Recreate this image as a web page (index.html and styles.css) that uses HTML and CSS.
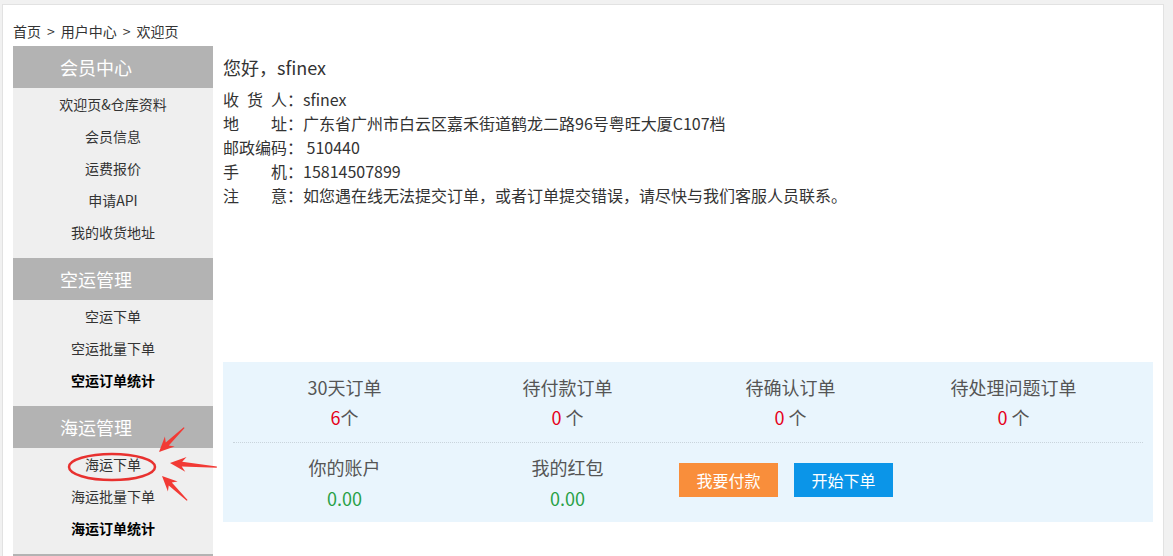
FILE: index.html
```html
<!DOCTYPE html>
<html lang="zh-CN">
  <head>
    <meta charset="UTF-8" />
    <meta name="viewport" content="width=device-width, initial-scale=1.0" />
    <title>用户中心 - 欢迎页</title>
    <link rel="stylesheet" href="styles.css">
  </head>
  <body>
    <div class="page">
      <div class="crumbs">
        <a href="#">首页</a><span class="sep">&gt;</span><a href="#">用户中心</a><span class="sep">&gt;</span><span>欢迎页</span>
      </div>

      <div class="layout">
        <aside class="sidebar">
          <div class="menu-group">
            <div class="menu-title">会员中心</div>
            <ul class="menu-list">
              <li><a href="#">欢迎页&amp;仓库资料</a></li>
              <li><a href="#">会员信息</a></li>
              <li><a href="#">运费报价</a></li>
              <li><a href="#">申请API</a></li>
              <li><a href="#">我的收货地址</a></li>
            </ul>
          </div>
          <div class="menu-group">
            <div class="menu-title">空运管理</div>
            <ul class="menu-list">
              <li><a href="#">空运下单</a></li>
              <li><a href="#">空运批量下单</a></li>
              <li><a href="#" class="strong">空运订单统计</a></li>
            </ul>
          </div>
          <div class="menu-group">
            <div class="menu-title">海运管理</div>
            <ul class="menu-list">
              <li><a href="#">海运下单</a></li>
              <li><a href="#">海运批量下单</a></li>
              <li><a href="#" class="strong">海运订单统计</a></li>
            </ul>
          </div>
          <div class="menu-group">
            <div class="menu-title"></div>
          </div>
        </aside>

        <main class="main">
          <h2 class="greet">您好，sfinex</h2>
          <ul class="info">
            <li><span class="info-label">收货人</span>：sfinex</li>
            <li><span class="info-label">地址</span>：广东省广州市白云区嘉禾街道鹤龙二路96号粤旺大厦C107档</li>
            <li><span class="info-label">邮政编码</span>： 510440</li>
            <li><span class="info-label">手机</span>：15814507899</li>
            <li><span class="info-label">注意</span>：如您遇在线无法提交订单，或者订单提交错误，请尽快与我们客服人员联系。</li>
          </ul>

          <div class="stats">
            <div class="stats-row">
              <div class="stat">
                <div class="stat-title">30天订单</div>
                <div class="stat-num"><em>6</em>个</div>
              </div>
              <div class="stat">
                <div class="stat-title">待付款订单</div>
                <div class="stat-num"><em>0</em> 个</div>
              </div>
              <div class="stat">
                <div class="stat-title">待确认订单</div>
                <div class="stat-num"><em>0</em> 个</div>
              </div>
              <div class="stat">
                <div class="stat-title">待处理问题订单</div>
                <div class="stat-num"><em>0</em> 个</div>
              </div>
            </div>
            <div class="stats-row second">
              <div class="stat">
                <div class="stat-title">你的账户</div>
                <div class="stat-money">0.00</div>
              </div>
              <div class="stat">
                <div class="stat-title">我的红包</div>
                <div class="stat-money">0.00</div>
              </div>
              <div class="stat-actions">
                <a href="#" class="btn btn-pay">我要付款</a>
                <a href="#" class="btn btn-order">开始下单</a>
              </div>
            </div>
          </div>
        </main>
      </div>
    </div>

    <!-- red marks drawn over the menu -->
    <svg class="marks" viewBox="60 415 170 100" width="170" height="100">
      <ellipse cx="112" cy="467" rx="43" ry="13" fill="none" stroke="#e8312f" stroke-width="2.5" />
      <g fill="#f23a35">
        <path transform="translate(159 452) rotate(-44)" d="M0 0 L15 -7 L11.5 -2.2 L35 -0.6 L35 0.6 L11.5 2.2 L15 7 Z" />
        <path transform="translate(170 463) rotate(5)" d="M0 0 L16 -7.5 L12 -2.4 L47 -0.7 L47 0.7 L12 2.4 L16 7.5 Z" />
        <path transform="translate(162 476) rotate(44)" d="M0 0 L15 -7 L11.5 -2.2 L35 -0.6 L35 0.6 L11.5 2.2 L15 7 Z" />
      </g>
    </svg>
  </body>
</html>
```

FILE: styles.css
```css
* {
  margin: 0;
  padding: 0;
  box-sizing: border-box;
}

body {
  font-family: "Noto Sans CJK SC", "Noto Sans", sans-serif;
  background: #f1f1f1;
  color: #333;
  overflow: hidden;
}

ul {
  list-style: none;
}

a {
  text-decoration: none;
  color: inherit;
}

.page {
  margin: 4px 9px 0 2px;
  background: #fff;
  border: 1px solid #e2e2e2;
  padding: 16px 10px 0 10px;
  min-height: 600px;
}

.crumbs {
  font-size: 14px;
  line-height: 20px;
  color: #333;
  margin-bottom: 5px;
}

.crumbs .sep {
  margin: 0 6px;
}

.layout {
  display: flex;
  gap: 10px;
}

/* sidebar */
.sidebar {
  width: 200px;
  flex-shrink: 0;
  background: #efefef;
}

.menu-title {
  height: 42px;
  line-height: 42px;
  padding-left: 47px;
  background: #b3b3b3;
  color: #fff;
  font-size: 18px;
}

.menu-list {
  padding-bottom: 10px;
}

.menu-list li {
  height: 32px;
  line-height: 32px;
  text-align: center;
  font-size: 14px;
}

.menu-list a {
  color: #333;
}

.menu-list a.strong {
  color: #000;
  font-weight: bold;
}

/* main */
.main {
  flex: 1;
}

.greet {
  margin-top: 8px;
  font-size: 18px;
  line-height: 26px;
  font-weight: normal;
  color: #333;
}

.info {
  margin-top: 7px;
  font-size: 16px;
  line-height: 24px;
  color: #333;
}

.info-label {
  display: inline-block;
  width: 64px;
  white-space: nowrap;
  text-align: justify;
  text-align-last: justify;
  vertical-align: top;
}

.stats {
  margin-top: 155px;
  background: #e9f5fd;
  padding: 0 10px;
}

.stats-row {
  display: grid;
  grid-template-columns: repeat(4, 223px);
  padding: 13px 0 12px;
}

.stats-row.second {
  border-top: 1px dotted #c9d4dc;
  padding: 12px 0 12px;
}

.stat {
  text-align: center;
  font-size: 18px;
  color: #555;
}

.stat-title {
  line-height: 24px;
}

.stat-num {
  margin-top: 5px;
  line-height: 26px;
}

.stat-num em {
  font-style: normal;
  color: #e5001a;
}

.stat-money {
  margin-top: 7px;
  line-height: 24px;
  color: #2aa147;
}

.stat-actions {
  grid-column: span 2;
  display: flex;
  align-items: center;
  gap: 16px;
  padding-bottom: 5px;
}

.btn {
  display: inline-block;
  width: 99px;
  height: 34px;
  line-height: 34px;
  text-align: center;
  color: #fff;
  font-size: 16px;
}

.btn-pay {
  background: #f98e3b;
}

.btn-order {
  background: #0b95e8;
}

.marks {
  position: absolute;
  left: 60px;
  top: 415px;
  pointer-events: none;
}
```
